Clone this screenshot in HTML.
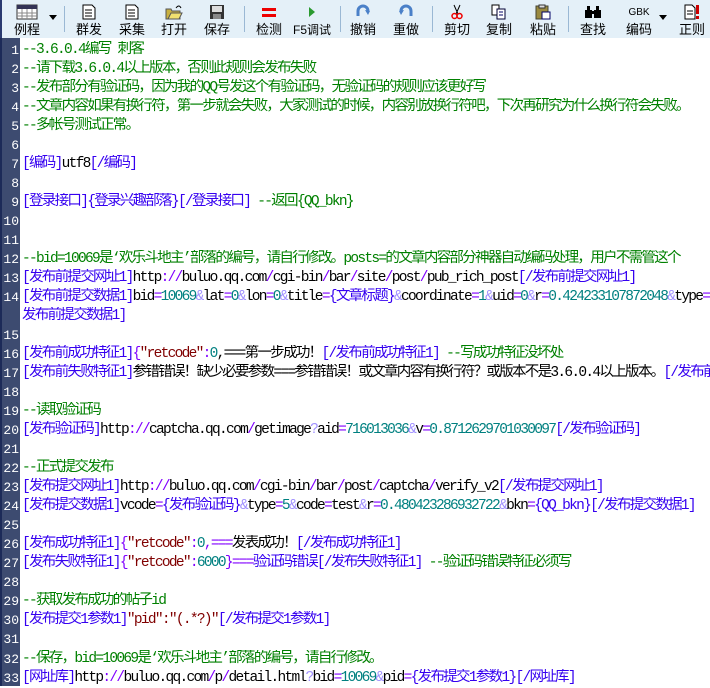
<!DOCTYPE html>
<html><head><meta charset="utf-8"><style>
body{margin:0;width:710px;height:686px;overflow:hidden;background:#fff;font-family:"Liberation Sans","Noto Sans CJK SC",sans-serif;position:relative}
#tb{position:absolute;left:0;top:0;width:710px;height:38px;background:#e4f0f8;border-left:2px solid #2a3a70;box-sizing:border-box}
.b{position:absolute;top:0;width:44px;text-align:center;font-size:13px;color:#000}
.b .i{height:18px;margin:3px auto 0;display:flex;justify-content:center;align-items:center}
.b .l{line-height:16px;margin-top:1px;white-space:nowrap}
.sep{position:absolute;top:6px;width:1px;height:26px;background:#9ab8d4}
#gut{position:absolute;left:0;top:38px;width:20px;height:648px;background:#3d4b70;border-left:2px solid #1c2a58;box-sizing:border-box;padding-top:3px}
#gut div,#code div{height:19.03px;line-height:19px;overflow:hidden}
#gut div{color:#fff;font-family:"Liberation Mono",monospace;font-size:13px;text-align:right;padding-right:1px}
#code{position:absolute;left:22px;top:41px;width:688px;height:645px;overflow:hidden;font-family:"Liberation Mono","Noto Sans CJK SC",monospace;font-size:14.5px;letter-spacing:-1.7px;color:#000}
#code div{white-space:pre}
.c{color:#008000}.t{color:#3500f0}.o{color:#8000ff}.a{color:#a090ff}.n{color:#008080}.s{color:#800000}
</style></head><body>
<div id="tb">
<div class="b" style="left:3px"><div class="i"><svg width="22" height="16"><rect x="1" y="1" width="20" height="14" fill="#fff" stroke="#333"/><rect x="1" y="1" width="20" height="4" fill="#335"/><path d="M1 9h20M1 12h20M6 5v10M11 5v10M16 5v10" stroke="#888"/></svg></div><div class="l">例程</div></div>
<div style="position:absolute;left:47px;top:15px;border:4px solid transparent;border-top:5px solid #000"></div>
<div class="sep" style="left:62px"></div>
<div class="b" style="left:65px"><div class="i"><svg width="14" height="16"><path d="M1 1h9l3 3v11H1z" fill="#fff" stroke="#000"/><path d="M3 6h7M3 9h7M3 12h7" stroke="#000"/></svg></div><div class="l">群发</div></div>
<div class="b" style="left:108px"><div class="i"><svg width="14" height="16"><path d="M1 1h9l3 3v11H1z" fill="#fff" stroke="#000"/><path d="M3 6h7M3 9h7M3 12h7" stroke="#000"/></svg></div><div class="l">采集</div></div>
<div class="b" style="left:150px"><div class="i"><svg width="18" height="16"><path d="M1 5h5l1 2h8v8H1z" fill="#c8b040" stroke="#555"/><path d="M3 15l3-6h11l-3 6z" fill="#f0e070" stroke="#555"/><path d="M11 4q3-4 5 0" stroke="#000" fill="none"/></svg></div><div class="l">打开</div></div>
<div class="b" style="left:193px"><div class="i"><svg width="16" height="16"><rect x="1" y="1" width="14" height="14" fill="#333"/><rect x="3" y="2" width="10" height="6" fill="#ddd"/><rect x="4" y="10" width="8" height="5" fill="#888"/></svg></div><div class="l">保存</div></div>
<div class="sep" style="left:242px"></div>
<div class="b" style="left:245px"><div class="i"><svg width="16" height="14"><rect x="1" y="3" width="14" height="3" fill="#e00"/><rect x="1" y="9" width="14" height="3" fill="#e00"/></svg></div><div class="l">检测</div></div>
<div class="b" style="left:288px"><div class="i"><svg width="10" height="14"><path d="M2 2l6 5-6 5z" fill="#2a9a30"/></svg></div><div class="l" style="font-size:12px">F5调试</div></div>
<div class="sep" style="left:338px"></div>
<div class="b" style="left:339px"><div class="i"><svg width="16" height="16"><path d="M3 12V7a5 5 0 0 1 10 0" stroke="#4a80c8" stroke-width="3" fill="none"/><path d="M10 6l5 1-2 4z" fill="#4a80c8"/></svg></div><div class="l">撤销</div></div>
<div class="b" style="left:382px"><div class="i"><svg width="16" height="16"><path d="M13 12V7a5 5 0 0 0-10 0" stroke="#4a80c8" stroke-width="3" fill="none"/><path d="M6 6l-5 1 2 4z" fill="#4a80c8"/></svg></div><div class="l">重做</div></div>
<div class="sep" style="left:430px"></div>
<div class="b" style="left:433px"><div class="i"><svg width="12" height="16"><path d="M3 1l4 9M9 1l-4 9" stroke="#000"/><circle cx="3.5" cy="12" r="2.5" fill="none" stroke="#e00" stroke-width="1.5"/><circle cx="8.5" cy="12" r="2.5" fill="none" stroke="#e00" stroke-width="1.5"/></svg></div><div class="l">剪切</div></div>
<div class="b" style="left:475px"><div class="i"><svg width="16" height="16"><path d="M1 1h7v10H1z" fill="#fff" stroke="#000"/><path d="M6 5h8v10H6z" fill="#fff" stroke="#003"/><path d="M8 8h4M8 11h4" stroke="#006"/></svg></div><div class="l">复制</div></div>
<div class="b" style="left:519px"><div class="i"><svg width="16" height="16"><rect x="1" y="2" width="12" height="13" fill="#9a8a40" stroke="#443"/><rect x="4" y="1" width="6" height="3" fill="#ddd" stroke="#333"/><rect x="7" y="8" width="8" height="7" fill="#fff" stroke="#006"/></svg></div><div class="l">粘贴</div></div>
<div class="sep" style="left:566px"></div>
<div class="b" style="left:569px"><div class="i"><svg width="18" height="14"><rect x="1" y="5" width="7" height="8" fill="#000"/><rect x="10" y="5" width="7" height="8" fill="#000"/><rect x="3" y="1" width="3" height="5" fill="#000"/><rect x="12" y="1" width="3" height="5" fill="#000"/><rect x="7" y="6" width="4" height="3" fill="#000"/></svg></div><div class="l">查找</div></div>
<div class="b" style="left:615px"><div class="i" style="font-size:10px">GBK</div><div class="l">编码</div></div>
<div style="position:absolute;left:657px;top:15px;border:4px solid transparent;border-top:5px solid #000"></div>
<div class="b" style="left:668px"><div class="i"><svg width="16" height="16"><path d="M1 1h7l3 3v11H1z" fill="#fff" stroke="#000"/><path d="M3 7h6M3 10h6" stroke="#000"/><rect x="12" y="1" width="3" height="9" fill="#c00"/><rect x="12" y="12" width="3" height="3" fill="#c00"/></svg></div><div class="l">正则</div></div>
</div>
<div id="gut">
<div>1</div><div>2</div><div>3</div><div>4</div><div>5</div><div>6</div><div>7</div><div>8</div><div>9</div><div>10</div><div>11</div><div>12</div><div>13</div><div>14</div><div></div><div>15</div><div>16</div><div>17</div><div>18</div><div>19</div><div>20</div><div>21</div><div>22</div><div>23</div><div>24</div><div>25</div><div>26</div><div>27</div><div>28</div><div>29</div><div>30</div><div>31</div><div>32</div><div>33</div>
</div>
<div id="code"><div class="c">--3.6.0.4编写 刺客</div><div class="c">--请下载3.6.0.4以上版本，否则此规则会发布失败</div><div class="c">--发布部分有验证码，因为我的QQ号发这个有验证码，无验证码的规则应该更好写</div><div class="c">--文章内容如果有换行符，第一步就会失败，大家测试的时候，内容别放换行符吧，下次再研究为什么换行符会失败。</div><div class="c">--多帐号测试正常。</div><div></div><div><span class="t">[编码]</span>utf8<span class="t">[/编码]</span></div><div></div><div><span class="t">[登录接口]{登录兴趣部落}[/登录接口]</span> <span class="c">--返回{QQ_bkn}</span></div><div></div><div></div><div class="c">--bid=10069是‘欢乐斗地主’部落的编号，请自行修改。posts=的文章内容部分神器自动编码处理，用户不需管这个</div><div><span class="t">[发布前提交网址1]</span>http<span class="o">://</span>buluo.qq.com<span class="o">/</span>cgi-bin<span class="o">/</span>bar<span class="o">/</span>site<span class="o">/</span>post<span class="o">/</span>pub_rich_post<span class="t">[/发布前提交网址1]</span></div><div><span class="t">[发布前提交数据1]</span>bid<span class="o">=</span><span class="n">10069</span><span class="a">&amp;</span>lat<span class="o">=</span><span class="n">0</span><span class="a">&amp;</span>lon<span class="o">=</span><span class="n">0</span><span class="a">&amp;</span>title<span class="o">=</span><span class="t">{文章标题}</span><span class="a">&amp;</span>coordinate<span class="o">=</span><span class="n">1</span><span class="a">&amp;</span>uid<span class="o">=</span><span class="n">0</span><span class="a">&amp;</span>r<span class="o">=</span><span class="n">0.424233107872048</span><span class="a">&amp;</span>type<span class="o">=</span></div><div><span class="t">发布前提交数据1]</span></div><div></div><div><span class="t">[发布前成功特征1]</span><span class="o">{</span><span class="s">"retcode"</span><span class="o">:</span><span class="n">0</span>,===第一步成功！<span class="t">[/发布前成功特征1]</span> <span class="c">--写成功特征没坏处</span></div><div><span class="t">[发布前失败特征1]</span>参错错误！缺少必要参数===参错错误！或文章内容有换行符？或版本不是3.6.0.4以上版本。<span class="t">[/发布前失败特征1]</span></div><div></div><div class="c">--读取验证码</div><div><span class="t">[发布验证码]</span>http<span class="o">://</span>captcha.qq.com<span class="o">/</span>getimage<span class="a">?</span>aid<span class="o">=</span><span class="n">716013036</span><span class="a">&amp;</span>v<span class="o">=</span><span class="n">0.8712629701030097</span><span class="t">[/发布验证码]</span></div><div></div><div class="c">--正式提交发布</div><div><span class="t">[发布提交网址1]</span>http<span class="o">://</span>buluo.qq.com<span class="o">/</span>cgi-bin<span class="o">/</span>bar<span class="o">/</span>post<span class="o">/</span>captcha<span class="o">/</span>verify_v2<span class="t">[/发布提交网址1]</span></div><div><span class="t">[发布提交数据1]</span>vcode<span class="o">=</span><span class="t">{发布验证码}</span><span class="a">&amp;</span>type<span class="o">=</span><span class="n">5</span><span class="a">&amp;</span>code<span class="o">=</span>test<span class="a">&amp;</span>r<span class="o">=</span><span class="n">0.480423286932722</span><span class="a">&amp;</span>bkn<span class="o">=</span><span class="t">{QQ_bkn}[/发布提交数据1]</span></div><div></div><div><span class="t">[发布成功特征1]</span><span class="o">{</span><span class="s">"retcode"</span><span class="o">:</span><span class="n">0</span><span class="o">,===</span>发表成功！<span class="t">[/发布成功特征1]</span></div><div><span class="t">[发布失败特征1]</span><span class="o">{</span><span class="s">"retcode"</span><span class="o">:</span><span class="n">6000</span><span class="o">}===</span><span class="t">验证码错误[/发布失败特征1]</span> <span class="c">--验证码错误特征必须写</span></div><div></div><div class="c">--获取发布成功的帖子id</div><div><span class="t">[发布提交1参数1]</span><span class="s">"pid":"(.*?)"</span><span class="t">[/发布提交1参数1]</span></div><div></div><div class="c">--保存，bid=10069是‘欢乐斗地主’部落的编号，请自行修改。</div><div><span class="t">[网址库]</span>http<span class="o">://</span>buluo.qq.com<span class="o">/</span>p<span class="o">/</span>detail.html<span class="a">?</span>bid<span class="o">=</span><span class="n">10069</span><span class="a">&amp;</span>pid<span class="o">=</span><span class="t">{发布提交1参数1}[/网址库]</span></div></div>
</body></html>
